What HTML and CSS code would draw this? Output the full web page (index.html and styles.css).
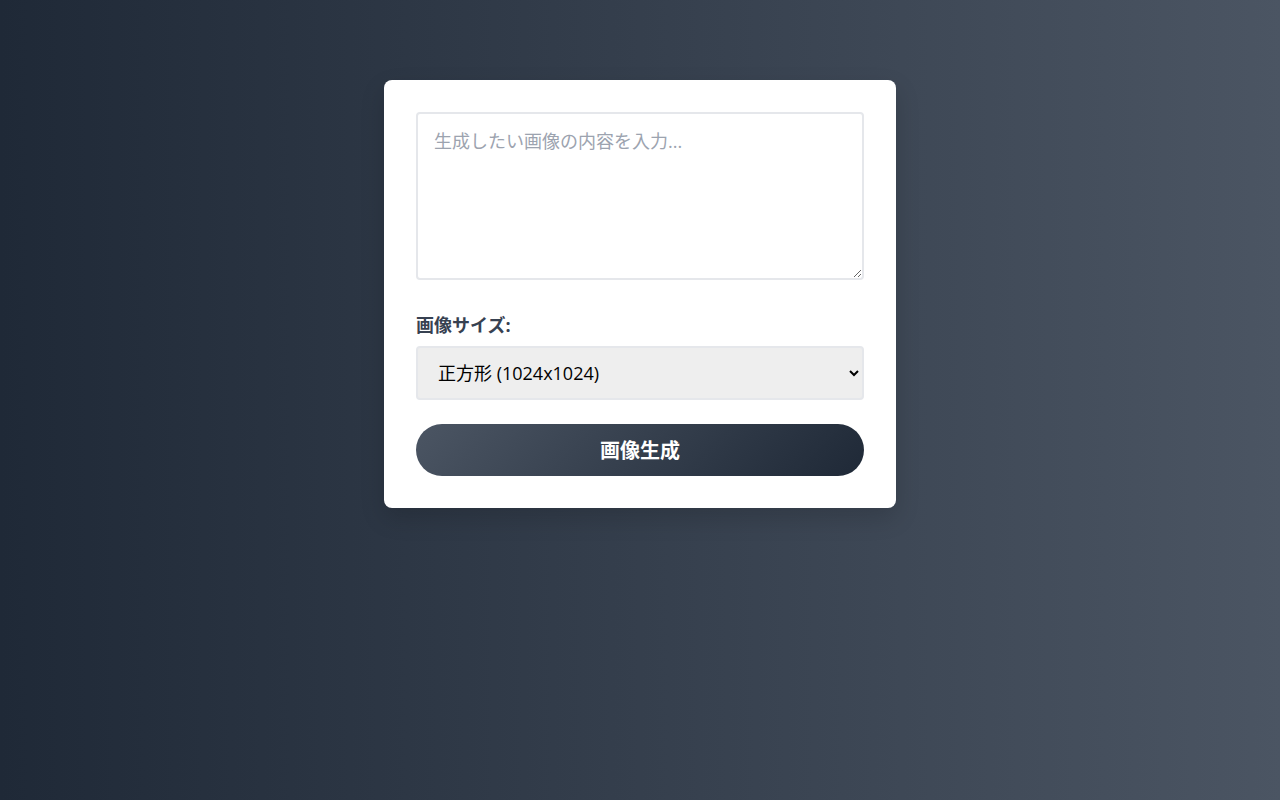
FILE: index.html
```html
<!DOCTYPE html>
<html lang="ja">
<head>
<meta charset="utf-8">
<link rel="stylesheet" href="styles.css">
</head>
<body>
<div class="card">
  <textarea class="prompt" placeholder="生成したい画像の内容を入力..."></textarea>
  <label class="label" for="size">画像サイズ:</label>
  <select id="size" class="select">
    <option>正方形 (1024x1024)</option>
    <option>横長 (1792x1024)</option>
    <option>縦長 (1024x1792)</option>
  </select>
  <button class="btn">画像生成</button>
</div>
</body>
</html>
```
FILE: styles.css
```css
html, body { height: 100%; }
body {
  margin: 0;
  padding: 80px 0;
  box-sizing: border-box;
  min-height: 100vh;
  background: linear-gradient(90deg, #1f2937 0%, #4b5563 100%);
  font-family: "Open Sans", "Noto Sans CJK JP", sans-serif;
}
.card {
  width: 512px;
  box-sizing: border-box;
  margin: 0 auto;
  background: #fff;
  border-radius: 8px;
  padding: 32px;
  display: flex;
  flex-direction: column;
  box-shadow: 0 10px 25px rgba(0,0,0,0.15);
}
.prompt {
  height: 168px;
  box-sizing: border-box;
  border: 2px solid #e5e7eb;
  border-radius: 4px;
  padding: 14px 16px;
  font-family: inherit;
  font-size: 18px;
  line-height: 27px;
  color: #111827;
  resize: vertical;
  outline: none;
  margin: 0 0 32px;
}
.prompt::placeholder { color: #9ca3af; }
.label {
  font-size: 18px;
  font-weight: 700;
  color: #374151;
  line-height: 26px;
  margin-bottom: 8px;
}
.select {
  height: 54px;
  box-sizing: border-box;
  border: 2px solid #e5e7eb;
  border-radius: 4px;
  background: #eeeeee;
  padding: 0 8px 0 16px;
  font-family: inherit;
  font-size: 18px;
  color: #000;
  margin-bottom: 24px;
}
.btn {
  height: 52px;
  border: none;
  border-radius: 26px;
  background: linear-gradient(135deg, #4b5563 0%, #1f2937 100%);
  color: #fff;
  font-family: inherit;
  font-size: 20px;
  font-weight: 700;
  padding: 0 0 2px;
  cursor: pointer;
}
```
